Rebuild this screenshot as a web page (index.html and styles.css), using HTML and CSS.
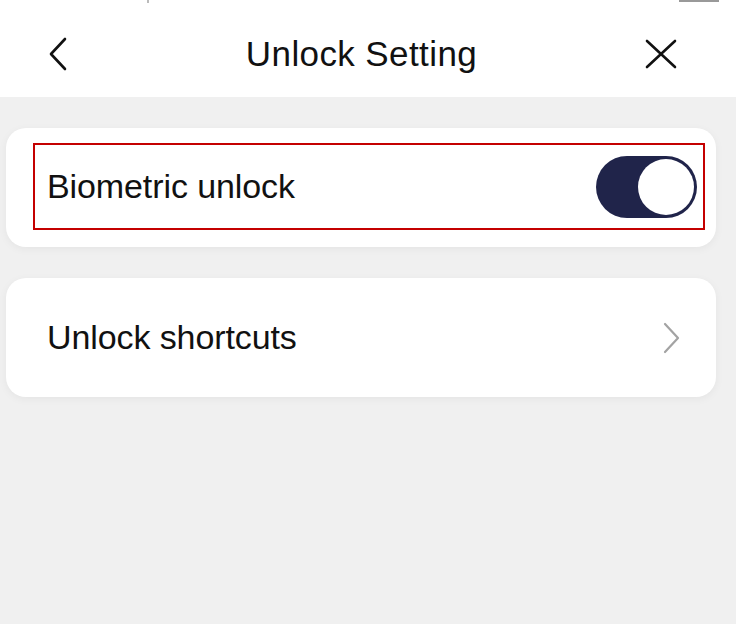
FILE: index.html
```html
<!DOCTYPE html>
<html lang="en">
<head>
    <meta charset="UTF-8">
    <meta name="viewport" content="width=device-width, initial-scale=1.0">
    <title>Unlock Setting</title>
    <link rel="stylesheet" href="styles.css">
</head>
<body>
    <header class="topBar">
        <div class="statusBar">
            <span class="statusDot"></span>
            <span class="statusBattery"></span>
        </div>
        <div class="navBar">
            <button class="navButton" aria-label="Back">
                <svg width="28" height="36" viewBox="0 0 28 36">
                    <polyline points="18,3 4,18 18,33" fill="none" stroke="#111" stroke-width="2.6" stroke-linecap="round" stroke-linejoin="round"/>
                </svg>
            </button>
            <h1 class="pageTitle">Unlock Setting</h1>
            <button class="navButton" aria-label="Close">
                <svg width="32" height="30" viewBox="0 0 32 30">
                    <line x1="2" y1="2" x2="30" y2="28" stroke="#111" stroke-width="2.6" stroke-linecap="round"/>
                    <line x1="30" y1="2" x2="2" y2="28" stroke="#111" stroke-width="2.6" stroke-linecap="round"/>
                </svg>
            </button>
        </div>
    </header>

    <main class="settingsList">
        <section class="settingCard">
            <div class="settingRow highlighted">
                <span class="settingLabel">Biometric unlock</span>
                <div class="toggle isOn">
                    <span class="toggleKnob"></span>
                </div>
            </div>
        </section>

        <section class="settingCard">
            <div class="settingRow linkRow">
                <span class="settingLabel">Unlock shortcuts</span>
                <svg width="22" height="34" viewBox="0 0 22 34">
                    <polyline points="4,3 17,17 4,31" fill="none" stroke="#a3a3a3" stroke-width="2.2" stroke-linecap="round" stroke-linejoin="round"/>
                </svg>
            </div>
        </section>
    </main>
</body>
</html>
```

FILE: styles.css
```css
* {
    box-sizing: border-box;
}

body {
    margin: 0;
    background-color: #f0f0f0;
    font-family: "Liberation Sans", Arial, Helvetica, sans-serif;
    color: #111;
    height: 624px;
    overflow: hidden;
}

.topBar {
    background-color: #fff;
    height: 97px;
}

.statusBar {
    height: 3px;
    display: flex;
    justify-content: space-between;
    padding: 0 17px 0 147px;
}

.statusDot {
    width: 2px;
    height: 3px;
    background-color: #bbb;
}

.statusBattery {
    width: 40px;
    height: 2px;
    background-color: #999;
}

.navBar {
    height: 94px;
    display: flex;
    align-items: center;
    justify-content: space-between;
    padding: 8px 59px 0 47px;
}

.navButton {
    background: none;
    border: none;
    padding: 0;
    display: flex;
}

.pageTitle {
    margin: 0;
    font-size: 35px;
    font-weight: normal;
    letter-spacing: 0.4px;
    padding-left: 3px;
}

.settingsList {
    padding: 31px 20px 0 6px;
    display: flex;
    flex-direction: column;
    gap: 31px;
}

.settingCard {
    background-color: #fff;
    border-radius: 20px;
    height: 119px;
    box-shadow: 0 2px 8px rgba(0, 0, 0, 0.05);
}

.settingRow {
    display: flex;
    align-items: center;
    justify-content: space-between;
    height: 100%;
}

.highlighted {
    margin: 15px 11px 0 27px;
    height: 87px;
    border: 2px solid #c40000;
    padding: 0 6px 0 12px;
}

.linkRow {
    padding: 0 33px 0 41px;
}

.settingLabel {
    font-size: 34px;
    letter-spacing: -0.1px;
}

.toggle {
    width: 101px;
    height: 62px;
    border-radius: 31px;
    background-color: #e0e0e0;
    display: flex;
    align-items: center;
    padding: 3px;
}

.toggle.isOn {
    background-color: #20244a;
    justify-content: flex-end;
}

.toggleKnob {
    width: 56px;
    height: 56px;
    border-radius: 50%;
    background-color: #fff;
}
```
